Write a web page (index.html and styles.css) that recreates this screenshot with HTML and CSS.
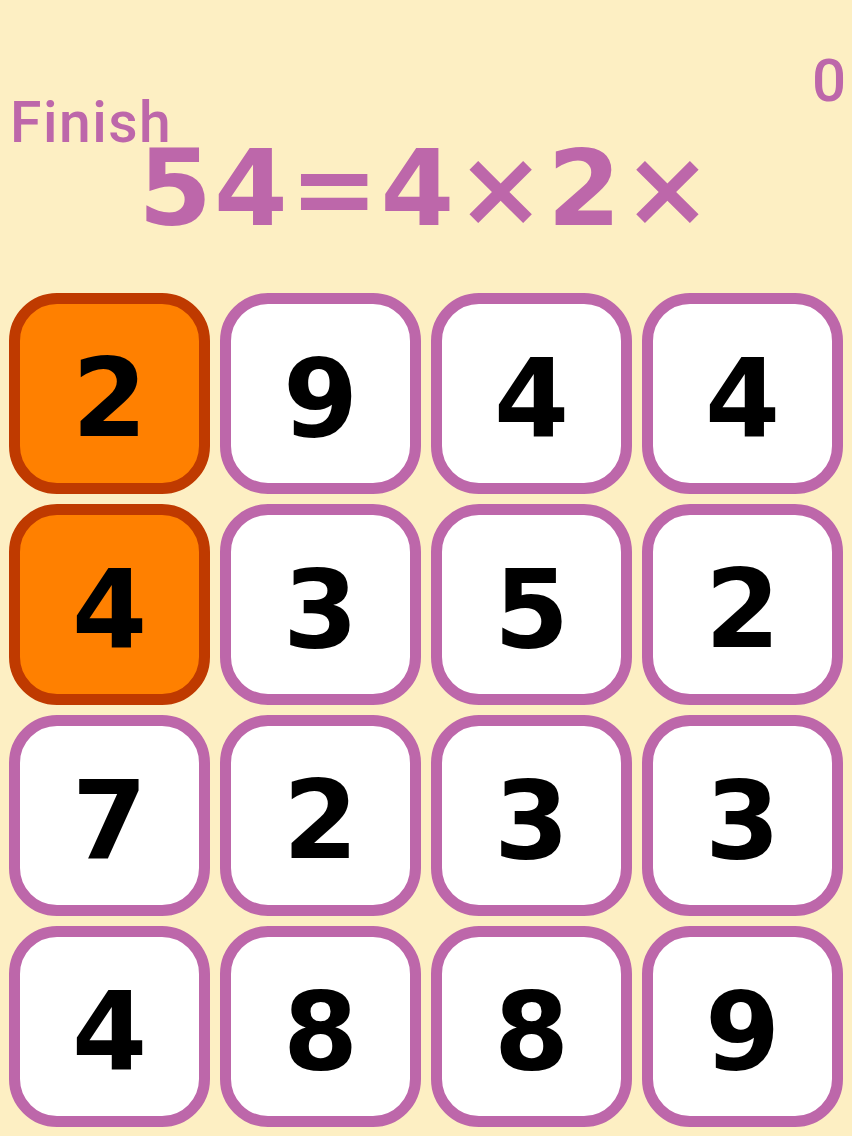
FILE: index.html
```html
<!DOCTYPE html>
<html>
<head>
<meta charset="utf-8">
<link rel="stylesheet" href="styles.css">
</head>
<body>
<div class="page">
  <header class="header">
    <div class="score">0</div>
    <div class="label">Finish</div>
    <div class="equation">54=4×2×</div>
  </header>
  <main class="board">
    <div class="tile selected">2</div>
    <div class="tile">9</div>
    <div class="tile">4</div>
    <div class="tile">4</div>
    <div class="tile selected">4</div>
    <div class="tile">3</div>
    <div class="tile">5</div>
    <div class="tile">2</div>
    <div class="tile">7</div>
    <div class="tile">2</div>
    <div class="tile">3</div>
    <div class="tile">3</div>
    <div class="tile">4</div>
    <div class="tile">8</div>
    <div class="tile">8</div>
    <div class="tile">9</div>
  </main>
</div>
</body>
</html>
```
FILE: styles.css
```css
html, body {
  margin: 0;
  padding: 0;
  background: #fdefc3;
}
.page {
  width: 852px;
  height: 1136px;
  overflow: hidden;
  background: #fdefc3;
  color: #bd67aa;
}
.header {
  display: flex;
  flex-direction: column;
}
.score {
  margin-top: 59px;
  padding-right: 6px;
  text-align: right;
  font-family: Roboto, "Liberation Sans", sans-serif;
  font-weight: 500;
  font-size: 60px;
  line-height: 44px;
  height: 44px;
}
.label {
  padding-left: 10px;
  font-family: Roboto, "Liberation Sans", sans-serif;
  font-weight: 500;
  font-size: 57px;
  letter-spacing: 1.5px;
  line-height: 40px;
  height: 40px;
}
.equation {
  margin-top: 7px;
  text-align: center;
  font-family: "DejaVu Sans", sans-serif;
  font-weight: bold;
  font-size: 106px;
  letter-spacing: 2px;
  line-height: 78px;
  height: 78px;
}
.board {
  margin-top: 65px;
  padding-left: 9px;
  display: grid;
  grid-template-columns: repeat(4, 201px);
  grid-auto-rows: 201px;
  gap: 10px;
}
.tile {
  box-sizing: border-box;
  border: 11px solid #bd67aa;
  border-radius: 48px;
  background: #ffffff;
  color: #000000;
  display: flex;
  align-items: center;
  justify-content: center;
  padding-top: 10px;
  font-family: "DejaVu Sans", sans-serif;
  font-weight: bold;
  font-size: 108px;
}
.tile.selected {
  background: #ff8000;
  border-color: #bf3a00;
}
```
